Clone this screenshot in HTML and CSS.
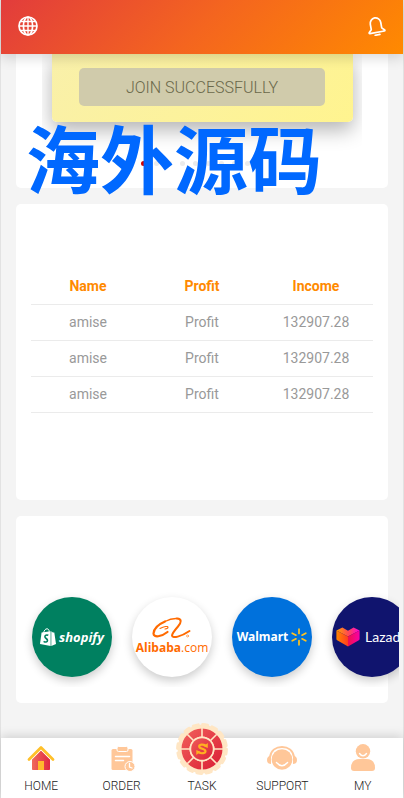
FILE: index.html
```html
<!DOCTYPE html>
<html lang="en">
<head>
    <meta charset="UTF-8">
    <meta name="viewport" content="width=device-width, initial-scale=1.0">
    <title>Home</title>
    <link rel="stylesheet" href="styles.css">
</head>
<body>

<div class="app">
    <header class="topbar">
        <button class="icon-btn" aria-label="Language">
            <svg width="20" height="20" viewBox="0 0 20 20" fill="none" stroke="#fff" stroke-width="1.7">
                <circle cx="10" cy="10" r="9"/>
                <ellipse cx="10" cy="10" rx="4.6" ry="9"/>
                <path d="M10 1v18M1 10h18M3 5.5h14M3 14.5h14" stroke-width="1.4"/>
            </svg>
        </button>
        <button class="icon-btn" aria-label="Messages">
            <svg width="20" height="20" viewBox="0 0 20 20" fill="none" stroke="#fff" stroke-width="1.7" stroke-linecap="round" stroke-linejoin="round">
                <g transform="rotate(-10 10 10)">
                    <path d="M4.700 12.800V7.400a5.300 5.600 0 0 1 10.600 0v5.400l2.600 2.700q.4.9-.6.9H2.700q-1 0-.6-.9z"/>
                    <path d="M7.600 19h4.800"/>
                </g>
            </svg>
        </button>
    </header>

    <main class="content">
        <section class="card vip">
            <div class="slider">
                <div class="slide">
                    <button class="join" disabled>JOIN SUCCESSFULLY</button>
                </div>
            </div>
            <div class="dots">
                <i class="dot active"></i><i class="dot"></i><i class="dot"></i><i class="dot"></i><i class="dot"></i>
                <i class="dot"></i><i class="dot"></i><i class="dot"></i><i class="dot"></i><i class="dot"></i>
            </div>
            <div class="watermark" lang="zh-CN">海外源码</div>
        </section>

        <section class="card income">
            <table>
                <thead>
                    <tr><th>Name</th><th>Profit</th><th>Income</th></tr>
                </thead>
                <tbody>
                    <tr><td>amise</td><td>Profit</td><td>132907.28</td></tr>
                    <tr><td>amise</td><td>Profit</td><td>132907.28</td></tr>
                    <tr><td>amise</td><td>Profit</td><td>132907.28</td></tr>
                </tbody>
            </table>
        </section>

        <section class="card partners">
            <div class="track">
                <div class="brand shopify">
                    <svg width="16" height="18" viewBox="0 0 16 18">
                        <path d="M1.6 4.6 10.6 3.2V18L0 16z" fill="#fff"/>
                        <path d="M11.3 3.2l1.6 1.2 1.4.2L16 16l-4.7 2z" fill="#fff"/>
                        <path d="M3.6 5C4 2.5 5.4.8 7 .8c1.5 0 2.200 1.200 2.200 3" fill="none" stroke="#fff"/>
                        <path d="M8.300 7.300C6.500 6.500 4.800 7.300 4.900 8.800c.1 1.700 2.700 1.800 2.600 3.700-.1 1.800-2.200 1.900-3.900.8" fill="none" stroke="#008060" stroke-width="1.6"/>
                    </svg>
                    <span>shopify</span>
                </div>
                <div class="brand alibaba">
                    <svg width="40" height="22" viewBox="0 0 40 22" fill="none" stroke="#ff6a00" stroke-linecap="round" stroke-linejoin="round">
                        <path d="M13 4.500C6 7.500 1.800 12 1.500 16.500c0 4.500 8 3.300 14-1.500" stroke-width="2.200"/>
                        <path d="M13 4.500C17 2.300 21 1.300 25 1.500" stroke-width="1.300"/>
                        <path d="M8 11.500C12 9.300 16 8.800 16 10.300q0 1.500-3 1.700" stroke-width="1.100"/>
                        <path d="M25 1.500c5 .3 4.500 4 1 8s-6 7-6 9.200c.5 3 9 1 17.500-4.700" stroke-width="2"/>
                        <circle cx="35.500" cy="19" r="1" stroke-width=".5"/>
                    </svg>
                    <span><b>Alibaba</b>.com</span>
                </div>
                <div class="brand walmart">
                    <span>Walmart</span>
                    <svg width="16" height="18" viewBox="0 0 16 18" stroke="#ffc220" stroke-width="1.7" stroke-linecap="round">
                        <path d="M8 1.200v4.300M8 12.500v4.300M1.200 5.200l3.800 2M11 10.800l3.800 2M1.200 12.800l3.800-2M11 7.200l3.800-2"/>
                    </svg>
                </div>
                <div class="brand lazada">
                    <svg width="24" height="20" viewBox="0 0 24 20">
                        <defs>
                            <linearGradient id="lz-top"><stop offset="0" stop-color="#ffa000"/><stop offset=".5" stop-color="#ff4b50"/><stop offset="1" stop-color="#ff00d8"/></linearGradient>
                            <linearGradient id="lz-left"><stop offset="0" stop-color="#ff8600"/><stop offset="1" stop-color="#ff3d20"/></linearGradient>
                            <linearGradient id="lz-right"><stop offset="0" stop-color="#f0104c"/><stop offset="1" stop-color="#f800a8"/></linearGradient>
                        </defs>
                        <path d="M.4 3.500 6.400.4 12 3.800 17.600.4l6 3.100L12 9.500z" fill="url(#lz-top)"/>
                        <path d="M.4 3.500 12 9.500V19.500L1.200 13.300q-.8-.5-.8-1.500z" fill="url(#lz-left)"/>
                        <path d="M23.600 3.500 12 9.500V19.500l10.800-6.200q.8-.5.8-1.500z" fill="url(#lz-right)"/>
                    </svg>
                    <span>Lazada</span>
                </div>
            </div>
        </section>
    </main>

    <nav class="tabbar">
        <a href="#">
            <svg width="28" height="28" viewBox="0 0 28 28">
                <defs><linearGradient id="red"><stop offset="0" stop-color="#f06a5c"/><stop offset="1" stop-color="#e02840"/></linearGradient></defs>
                <path d="M5 14.500 14 6l9 8.500V25.200q0 .8-.8.8H5.800q-.8 0-.8-.8z" fill="url(#red)"/>
                <path d="M2 15.500 14 3.500l12 12" fill="none" stroke="#fff" stroke-width="4.500"/>
                <path d="M2 15.500 14 3.500l12 12" fill="none" stroke="#ffc02a" stroke-width="2.800" stroke-linecap="round" stroke-linejoin="round"/>
                <path d="M11 17h6v9h-6z" fill="#ffb92e"/>
            </svg>
            <span>HOME</span>
        </a>
        <a href="#">
            <svg width="28" height="28" viewBox="0 0 28 28">
                <rect x="3.500" y="5" width="21" height="21" rx="1.500" fill="#ffc799"/>
                <rect x="9" y="2.500" width="11" height="5" rx="1.500" fill="#ffc799" stroke="#fff"/>
                <path d="M7.500 12.500h14M7.500 16.500h8" stroke="#fff" stroke-width="1.500" stroke-linecap="round"/>
                <circle cx="22" cy="22.500" r="5" fill="#ffc799" stroke="#fff"/>
                <path d="M21.500 19.500v3.500l2.500 1" fill="none" stroke="#fff" stroke-width="1.300" stroke-linecap="round"/>
            </svg>
            <span>ORDER</span>
        </a>
        <a href="#">
            <svg class="wheel" width="52" height="52" viewBox="0 0 52 52">
                <defs><linearGradient id="red2" x2="1" y2="1"><stop offset="0" stop-color="#ef5a58"/><stop offset="1" stop-color="#dc2438"/></linearGradient></defs>
                <circle cx="26" cy="26" r="24.400" fill="#ffe6c4"/>
                <circle cx="26" cy="26" r="24.400" fill="none" stroke="#ffe6c4" stroke-width="3" stroke-dasharray="5 4.580" stroke-linecap="round"/>
                <circle cx="26" cy="26" r="16.500" fill="none" stroke="url(#red2)" stroke-width="8"/>
                <path d="M26 5v42M5 26h42M11.200 11.200l29.600 29.600M40.800 11.200 11.200 40.800" stroke="#ffe6c4" stroke-width="1.600"/>
                <circle cx="26" cy="26" r="12.500" fill="#ffe6c4"/>
                <circle cx="26" cy="26" r="10.800" fill="url(#red2)"/>
                <path d="M29.500 22.300c-3-1.300-6.300-.8-6.300 1.200 0 2.800 6.300 1.800 6.300 4.700 0 2-3.500 2.700-6.800 1.400" fill="none" stroke="#ffb021" stroke-width="2.200"/>
                <path d="M31.800 20v5l-4.300-1.800zM20.300 32v-5l4.300 1.800z" fill="#ffb021"/>
            </svg>
            <span>TASK</span>
        </a>
        <a href="#">
            <svg width="32" height="28" viewBox="0 0 32 28">
                <circle cx="16" cy="15.500" r="10.300" fill="#ffc799"/>
                <path d="M4 13C5 6.500 10 3 16 3s11 3.500 12 10" fill="none" stroke="#ffc799" stroke-width="2"/>
                <path d="M5 11.500v8.500Q1 20 1 16t4-4.500zM27 11.500v8.500q4 0 4-4t-4-4.500z" fill="#ffc799"/>
                <path d="M10.500 18.500q5.500 6.500 11 0" fill="none" stroke="#fff" stroke-width="1.500" stroke-linecap="round"/>
            </svg>
            <span>SUPPORT</span>
        </a>
        <a href="#">
            <svg width="28" height="28" viewBox="0 0 28 28">
                <circle cx="14" cy="7.300" r="7.200" fill="#ffc799"/>
                <path d="M10.500 9.500q3.500 4.500 7 0" fill="none" stroke="#fff" stroke-width="1.400" stroke-linecap="round"/>
                <path d="M2 24q0-9 9-9h6q9 0 9 9 0 3-3 3H5q-3 0-3-3z" fill="#ffc799"/>
            </svg>
            <span>MY</span>
        </a>
    </nav>
</div>

</body>
</html>
```
FILE: styles.css
```css
* {
    box-sizing: border-box;
}
body {
    margin: 0;
    background-color: #f4f4f4;
    font-family: Roboto, "Liberation Sans", sans-serif;
    font-size: 14px;
}
.app {
    display: flex;
    flex-direction: column;
    height: 100vh;
    border: solid #e2e2e2;
    border-width: 0 1px;
}
.topbar {
    position: relative;
    z-index: 2;
    flex: none;
    display: flex;
    justify-content: space-between;
    align-items: center;
    height: 54px;
    padding: 0 17px 2px;
    background: linear-gradient(135deg, #e23c3c 0%, #f4651f 50%, #ff8a00 100%);
    box-shadow: 0 4px 12px rgba(0, 0, 0, 0.15);
}
.icon-btn {
    padding: 0;
    border: none;
    background: none;
    line-height: 0;
    cursor: pointer;
}
.content {
    flex: 1;
    min-height: 0;
    overflow: hidden;
    padding: 0 15px;
}
.card {
    margin-bottom: 16px;
    border-radius: 5px;
    background: #fff;
}

/* vip levels */
.vip {
    position: relative;
    padding: 0 26px 22px;
    border-radius: 0 0 5px 5px;
}
.slider {
    overflow: hidden;
    padding: 0 9px 52px 10px;
}
.slide {
    padding: 14px 28px 16px 27px;
    border-radius: 0 0 5px 5px;
    background: linear-gradient(135deg, #f9f0aa, #fff48f);
    box-shadow: 0 8px 20px rgba(0, 0, 0, 0.3);
}
.join {
    display: block;
    width: 100%;
    height: 38px;
    border: none;
    border-radius: 5px;
    background: #d0cbab;
    color: #6a684a;
    font-family: inherit;
    font-size: 16px;
    font-weight: 300;
}
.dots {
    display: flex;
    justify-content: center;
    gap: 8px;
    margin-top: -13px;
}
.dot {
    width: 5px;
    height: 5px;
    border-radius: 50%;
    background: #ebebeb;
}
.dot.active {
    background: #d00000;
}
.watermark {
    position: absolute;
    left: 10px;
    bottom: -5px;
    color: #0068ff;
    font-family: "Noto Sans CJK SC", sans-serif;
    font-size: 74px;
    font-weight: bold;
    line-height: 74px;
    white-space: nowrap;
}

/* income list */
.income {
    padding: 64px 15px 87px;
}
.income table {
    width: 100%;
    table-layout: fixed;
    border-collapse: collapse;
    text-align: center;
}
.income th,
.income td {
    height: 36px;
    padding: 0;
    border-bottom: 1px solid #ebebeb;
    color: #999;
}
.income th {
    color: #ff8a00;
}

/* partners */
.partners {
    padding: 71px 0 16px 3px;
}
.track {
    display: flex;
    gap: 20px;
    margin-right: -11px;
    padding: 10px 0 10px 13px;
    overflow: hidden;
}
.brand {
    flex: none;
    display: flex;
    align-items: center;
    justify-content: center;
    gap: 3px;
    width: 80px;
    height: 80px;
    border-radius: 50%;
    background: #fff;
    box-shadow: 0 4px 10px rgba(0, 0, 0, 0.2);
    color: #fff;
    font-family: "Open Sans", sans-serif;
}
.shopify {
    background: #008060;
    font-style: italic;
    font-weight: bold;
}
.shopify span {
    font-size: 13px;
}
.alibaba {
    flex-direction: column;
    gap: 0;
    color: #ff6a00;
    font-size: 12px;
}
.alibaba span {
    line-height: 18px;
}
.walmart {
    background: #0071dc;
    font-family: "Noto Sans", sans-serif;
    font-size: 12px;
    font-weight: bold;
}
.lazada {
    justify-content: flex-start;
    gap: 5px;
    padding-left: 4px;
    background: #10146e;
    font-family: Lato, sans-serif;
}

/* bottom navigation */
.tabbar {
    position: relative;
    z-index: 2;
    flex: none;
    display: flex;
    height: 60px;
    background: #fff;
    box-shadow: 0 -2px 10px rgba(0, 0, 0, 0.15);
}
.tabbar a {
    flex: 1 1 0;
    display: flex;
    flex-direction: column;
    align-items: center;
    justify-content: flex-end;
    gap: 6px;
    padding-bottom: 4px;
    color: #222;
    font-size: 12px;
    font-weight: 300;
    line-height: 16px;
    text-decoration: none;
}
.tabbar svg {
    flex: none;
}
.tabbar .wheel {
    margin-bottom: -3px;
}
```
